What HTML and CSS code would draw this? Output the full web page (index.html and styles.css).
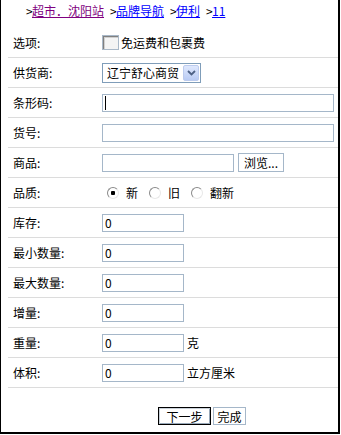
FILE: index.html
```html
<!DOCTYPE html>
<html lang="zh-CN">
<head>
<meta charset="utf-8">
<title>商品</title>
<link rel="stylesheet" href="styles.css">
</head>
<body>
<div class="panel">
  <div class="crumbs"><span class="gt first">&gt;</span><a class="visited" href="#">超市．沈阳站</a><span class="gt">&gt;</span><a href="#">品牌导航</a><span class="gt">&gt;</span><a href="#">伊利</a><span class="gt">&gt;</span><a href="#">11</a></div>
  <div class="form">
    <div class="row"><div class="label">选项:</div><div class="field"><span class="check"></span><span>免运费和包裹费</span></div></div>
    <div class="row"><div class="label">供货商:</div><div class="field"><span class="select"><span class="select-text">辽宁舒心商贸</span><span class="select-btn"><svg width="9" height="6" viewBox="0 0 9 6"><path d="M1 1 L4.5 4.5 L8 1" fill="none" stroke="#4d6185" stroke-width="1.8"/></svg></span></span></div></div>
    <div class="row"><div class="label">条形码:</div><div class="field"><span class="caret-wrap"><input class="text wide" type="text" value=""><span class="caret"></span></span></div></div>
    <div class="row"><div class="label">货号:</div><div class="field"><input class="text wide" type="text" value=""></div></div>
    <div class="row"><div class="label">商品:</div><div class="field"><input class="text mid" type="text" value=""><span class="browse">浏览...</span></div></div>
    <div class="row"><div class="label">品质:</div><div class="field radios"><span class="radio on first"></span><span class="rlabel">新</span><span class="radio"></span><span class="rlabel">旧</span><span class="radio"></span><span class="rlabel">翻新</span></div></div>
    <div class="row"><div class="label">库存:</div><div class="field"><input class="text small" type="text" value="0"></div></div>
    <div class="row"><div class="label">最小数量:</div><div class="field"><input class="text small" type="text" value="0"></div></div>
    <div class="row"><div class="label">最大数量:</div><div class="field"><input class="text small" type="text" value="0"></div></div>
    <div class="row"><div class="label">增量:</div><div class="field"><input class="text small" type="text" value="0"></div></div>
    <div class="row"><div class="label">重量:</div><div class="field"><input class="text small" type="text" value="0"><span class="unit">克</span></div></div>
    <div class="row"><div class="label">体积:</div><div class="field"><input class="text small" type="text" value="0"><span class="unit">立方厘米</span></div></div>
  </div>
  <div class="actions"><span class="btn default">下一步</span><span class="btn plain">完成</span></div>
</div>
</body>
</html>
```

FILE: styles.css
```css
html, body {
  margin: 0;
  padding: 0;
  background: #ffffff;
}
body {
  font-family: "Noto Sans CJK SC", "Liberation Sans", sans-serif;
  font-size: 12px;
  color: #000;
}
.panel {
  width: 337px;
  height: 432px;
  border-left: 1px solid #000;
  border-right: 2px solid #000;
  border-bottom: 2px solid #000;
  display: flex;
  flex-direction: column;
}
.crumbs {
  height: 28px;
  box-sizing: border-box;
  padding: 3px 0 0 25px;
  line-height: 15px;
  white-space: nowrap;
}
.crumbs a {
  color: #0000ff;
  text-decoration: underline;
}
.crumbs a.visited {
  color: #800080;
}
.gt {
  display: inline-block;
  margin-left: 6px;
  width: 6px;
}
.gt.first { margin-left: 0; }
.row {
  display: grid;
  grid-template-columns: 89px 1fr;
  align-items: center;
  height: 29px;
  border-bottom: 1px solid #dcdcdc;
  margin-left: 7px;
  padding-left: 5px;
}
.label {
  line-height: 14px;
}
.field {
  display: flex;
  align-items: center;
  line-height: 14px;
  white-space: nowrap;
}
.check {
  width: 17px;
  height: 15px;
  box-sizing: border-box;
  border: 1px solid #a9b8c8;
  box-shadow: inset 1px 1px 0 #808080, inset 2px 2px 0 #d0d0d0;
  background: #f4f4f4;
  margin-right: 2px;
}
.select {
  width: 99px;
  height: 20px;
  box-sizing: border-box;
  border: 1px solid #7f9db9;
  display: flex;
  align-items: center;
  justify-content: space-between;
  padding: 0 1px 0 4px;
}
.select-text { line-height: 14px; }
.select-btn {
  width: 16px;
  height: 16px;
  box-sizing: border-box;
  border: 1px solid #bccbee;
  border-radius: 2px;
  background: linear-gradient(#dfe8fd, #b9cbf4);
  display: flex;
  align-items: center;
  justify-content: center;
}
.text {
  box-sizing: border-box;
  height: 18px;
  border: 1px solid #a5b7c9;
  padding: 0 2px;
  margin: 0;
  font: inherit;
  font-size: 12px;
  line-height: 14px;
  outline: none;
  background: #fff;
}
.wide { width: 232px; }
.mid { width: 132px; }
.small { width: 82px; }
.caret-wrap {
  position: relative;
  display: flex;
}
.caret {
  position: absolute;
  left: 3px;
  top: 2px;
  width: 1px;
  height: 14px;
  background: #000;
}
.browse {
  margin-left: 4px;
  height: 19px;
  width: 46px;
  box-sizing: border-box;
  border: 1px solid #a5b7c9;
  display: flex;
  align-items: center;
  justify-content: center;
  background: #fff;
}
.radio {
  width: 12px;
  height: 12px;
  box-sizing: border-box;
  border-radius: 50%;
  border: 1px solid;
  border-color: #8a8a8a #e8e8e8 #e8e8e8 #8a8a8a;
  background: #fff;
  margin-right: 7px;
}
.radio.first { margin-left: 5px; }
.radio.on {
  background: radial-gradient(circle, #000 0 2px, #fff 2.5px);
}
.rlabel {
  margin-right: 11px;
}
.unit {
  margin-left: 3px;
}
.actions {
  flex: 1;
  display: flex;
  align-items: flex-start;
  padding: 19px 0 0 157px;
  gap: 2px;
}
.btn {
  height: 18px;
  box-sizing: border-box;
  border: 1px solid #a5b7c9;
  display: flex;
  align-items: center;
  justify-content: center;
  white-space: nowrap;
  background: #fff;
}
.btn.default {
  width: 53px;
  border: 1px solid #000;
  box-shadow: inset 1px 1px 0 #c8d0d8, inset -1px -1px 0 #98a8b8;
}
.btn.plain { width: 33px; }
```
